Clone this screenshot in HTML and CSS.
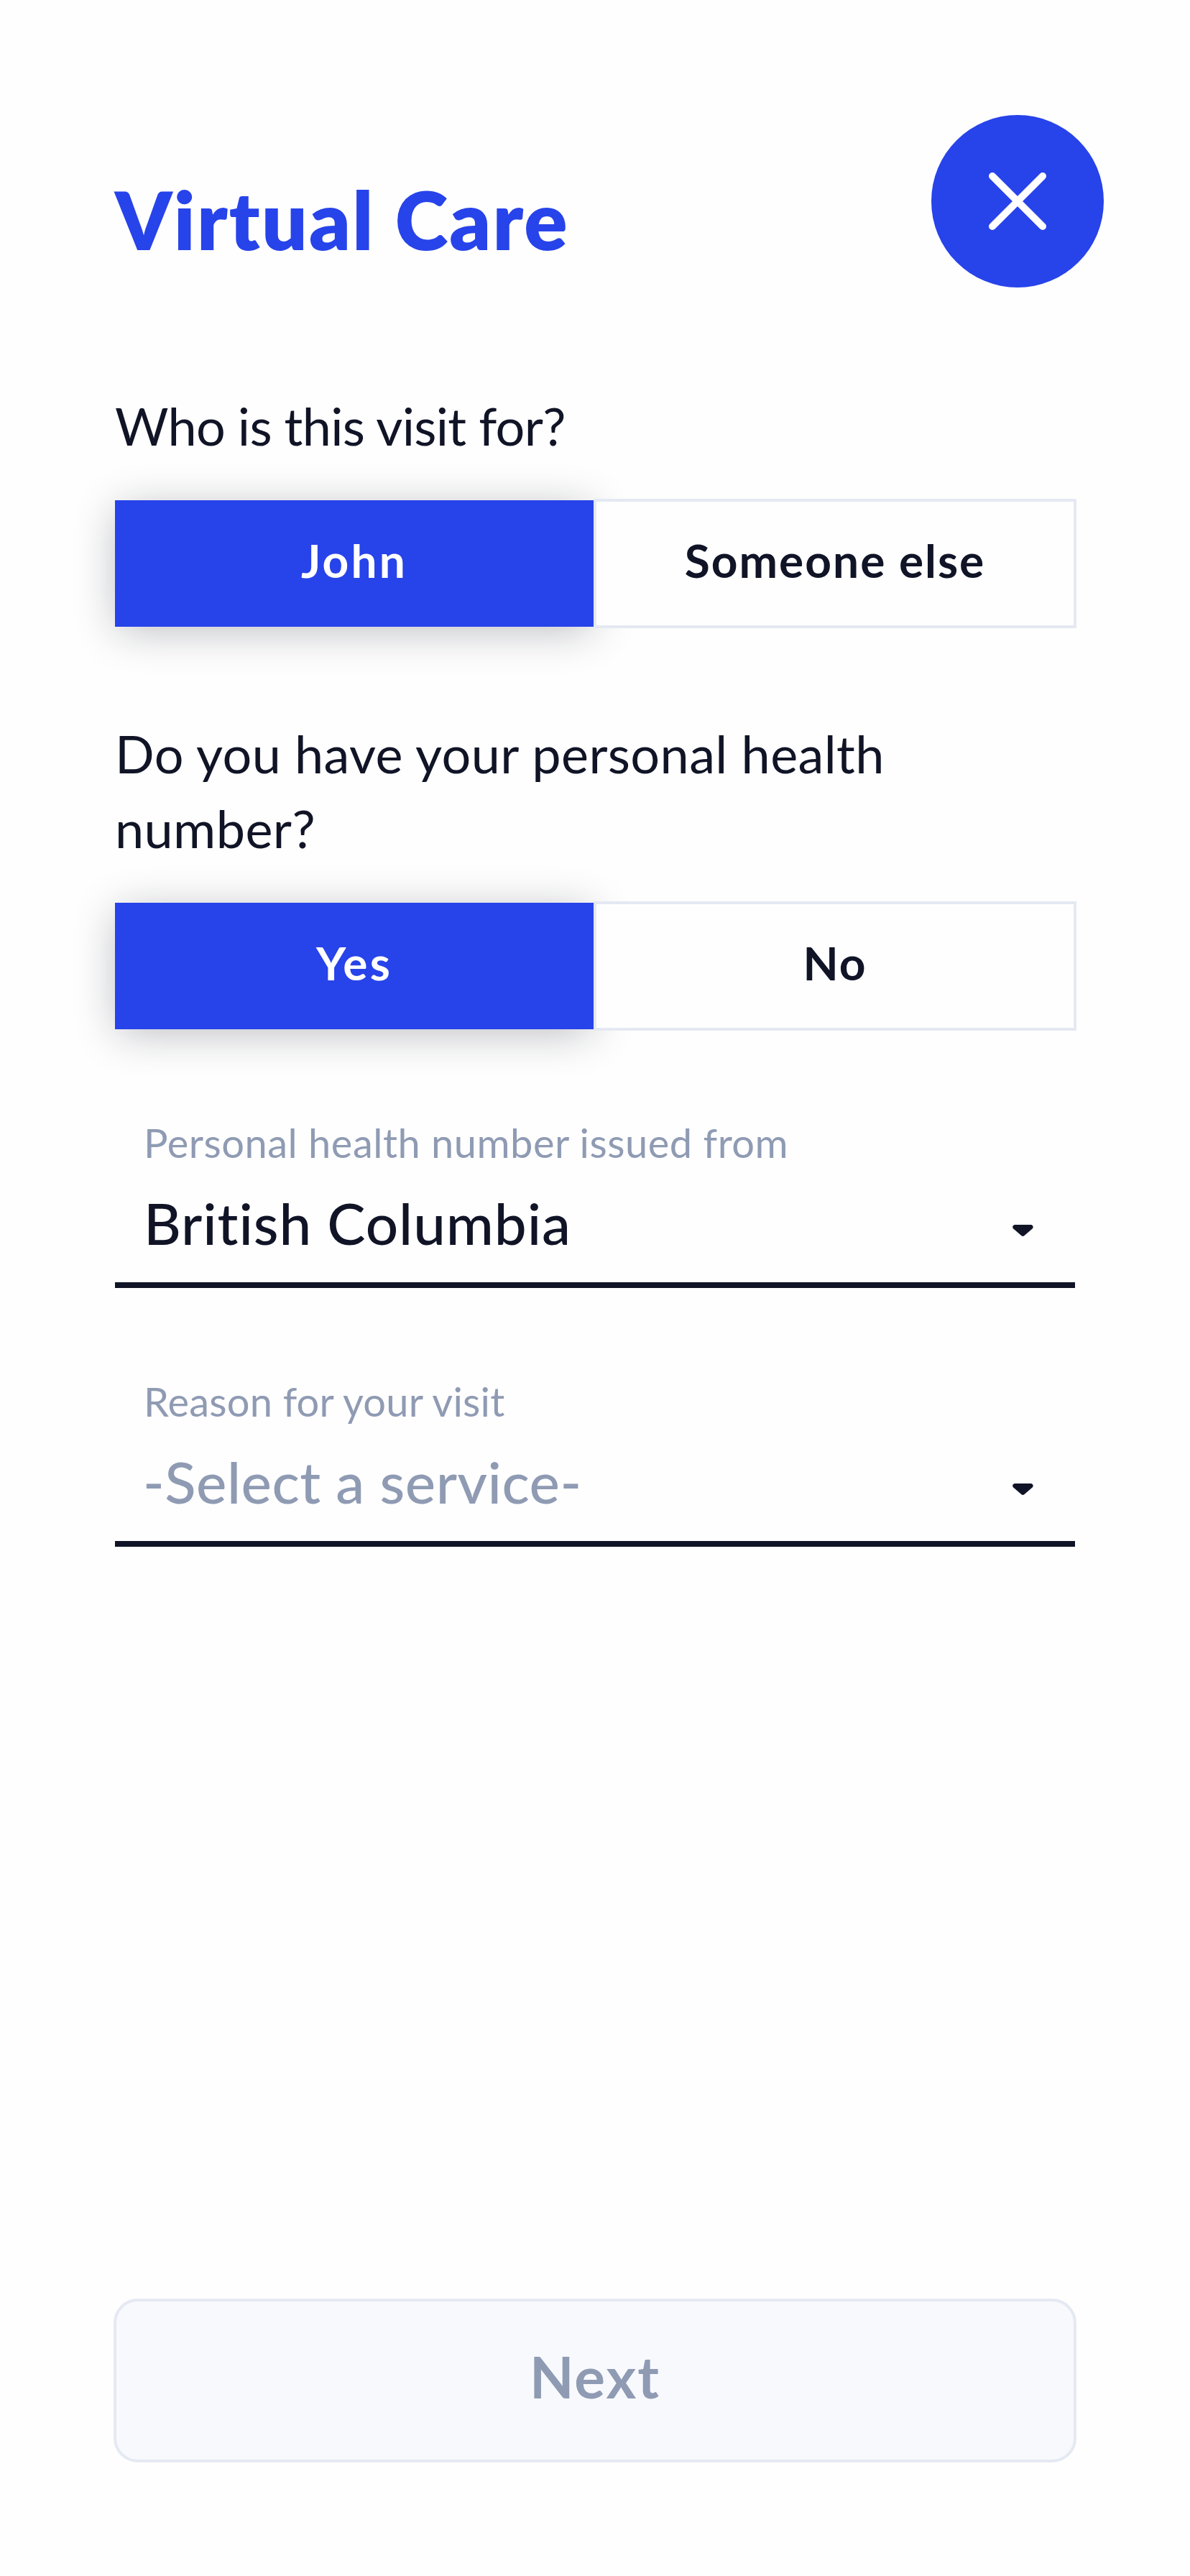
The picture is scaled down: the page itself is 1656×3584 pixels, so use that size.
FILE: index.html
```html
<!DOCTYPE html>
<html lang="en">
<head>
  <meta charset="UTF-8">
  <meta name="viewport" content="width=device-width, initial-scale=1.0">
  <title>Virtual Care</title>
  <link rel="stylesheet" href="styles.css">
</head>
<body>
  <main class="page">
    <header class="header">
      <h1 class="title">Virtual Care</h1>
      <button class="close-btn" type="button" aria-label="Close">
        <svg width="80" height="80" viewBox="0 0 80 80">
          <path d="M5 5L75 75M75 5L5 75" fill="none" stroke="#fff" stroke-width="10" stroke-linecap="round"/>
        </svg>
      </button>
    </header>

    <section class="question">
      <p class="question-text tight">Who is this visit for?</p>
      <div class="toggle">
        <button class="option selected" type="button">John</button>
        <button class="option" type="button">Someone else</button>
      </div>
    </section>

    <section class="question">
      <p class="question-text">Do you have your personal health number?</p>
      <div class="toggle">
        <button class="option selected" type="button">Yes</button>
        <button class="option" type="button">No</button>
      </div>
    </section>

    <section class="fields">
      <div class="field">
        <div class="field-label">Personal health number issued from</div>
        <div class="field-value">
          <span>British Columbia</span>
          <svg class="arrow" width="29" height="16" viewBox="0 0 29 16">
            <path d="M3 0H26Q28.5 0.3 28.7 3Q28.6 4.6 27.6 5.5L16.3 15.2Q14.4 16.7 12.5 15.2L1.2 5.5Q0.2 4.6 0.1 3Q0.3 0.3 3 0Z"/>
          </svg>
        </div>
      </div>
      <div class="field">
        <div class="field-label reason">Reason for your visit</div>
        <div class="field-value placeholder">
          <span>-Select a service-</span>
          <svg class="arrow" width="29" height="16" viewBox="0 0 29 16">
            <path d="M3 0H26Q28.5 0.3 28.7 3Q28.6 4.6 27.6 5.5L16.3 15.2Q14.4 16.7 12.5 15.2L1.2 5.5Q0.2 4.6 0.1 3Q0.3 0.3 3 0Z"/>
          </svg>
        </div>
      </div>
    </section>

    <button class="next-btn" type="button">Next</button>
  </main>
</body>
</html>
```
FILE: styles.css
```css
* { margin: 0; padding: 0; box-sizing: border-box; }
body { background: #fefefe; color: #101426; font-family: Lato, "Open Sans", sans-serif; font-variant-ligatures: none; }
button { font-family: inherit; border: none; cursor: pointer; }

.page { display: flex; flex-direction: column; width: 1656px; height: 3584px; padding: 160px 160px 158px; }

.header { display: flex; justify-content: space-between; align-items: flex-start; margin: 0 -40px 140px 0; }
.title { padding-top: 77px; font-size: 112px; line-height: 136px; font-weight: 800; letter-spacing: 2.2px; color: #2743ea; }
.close-btn { display: flex; justify-content: center; align-items: center; width: 240px; height: 240px; border-radius: 50%; background: #2743ea; }

.question { margin-bottom: 122px; }
.question-text { margin-bottom: 50px; font-size: 72px; line-height: 104px; letter-spacing: 0.4px; }
.question-text.tight { letter-spacing: -0.7px; }

.toggle { display: flex; align-items: center; height: 180px; margin-right: -2px; }
.option { flex: 1; height: 180px; padding-bottom: 9px; border: 4px solid #e4e9f2; background: #fefefe; color: #101426; font-size: 64px; font-weight: 700; letter-spacing: 2px; position: relative; }
.option.selected { flex: 0 0 666px; height: 176px; border: none; background: #2743ea; color: #fff; letter-spacing: 3.2px; box-shadow: 0 8px 60px -4px rgba(16, 20, 38, 0.29); }

.fields { margin-top: -2px; }
.field { margin-bottom: 122px; border-bottom: 8px solid #101426; }
.field-label { margin-bottom: 27px; padding-left: 40px; font-size: 56px; line-height: 72px; letter-spacing: 0.5px; color: #8f9bb3; }
.field-label.reason { letter-spacing: 0.2px; }
.field-value { display: flex; justify-content: space-between; align-items: center; padding: 0 58px 35px 40px; font-size: 80px; line-height: 96px; font-weight: 500; letter-spacing: 0.9px; }
.field-value.placeholder { padding-left: 39px; letter-spacing: 0.5px; }
.field-value.placeholder span { color: #8f9bb3; }
.arrow { margin-top: 22px; fill: #101426; }

.next-btn { height: 228px; margin: auto -2px 0; padding-bottom: 12px; border: 4px solid #e4e9f2; border-radius: 34px; background: #f8f9fd; color: #8f9bb3; font-size: 80px; font-weight: 700; letter-spacing: 2px; }
```
